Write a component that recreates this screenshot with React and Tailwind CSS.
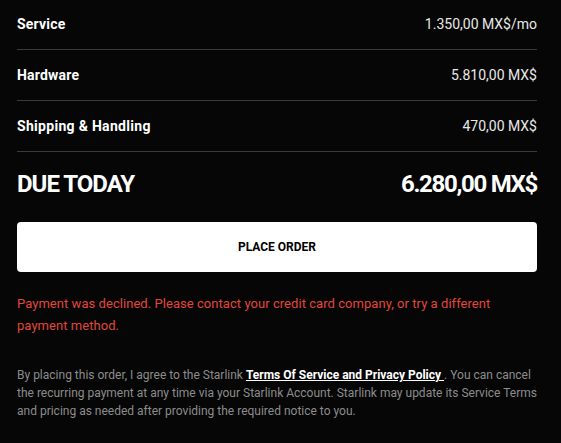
export default function App() {
  const font = { fontFamily: "Roboto, 'Liberation Sans', sans-serif" };
  return (
    <div className="min-h-[443px] w-full bg-[#060606] pl-[17px] pr-[24px] text-white" style={font}>
      <div className="flex h-[50px] items-center justify-between border-b border-[#3a3a3a] pb-[1px]">
        <span className="text-[14px] font-bold tracking-[0.2px]">Service</span>
        <span className="text-[14px] text-[#e8e8e8]">1.350,00 MX$/mo</span>
      </div>
      <div className="flex h-[51px] items-center justify-between border-b border-[#3a3a3a]">
        <span className="text-[14px] font-bold tracking-[0.2px]">Hardware</span>
        <span className="text-[14px] text-[#e8e8e8]">5.810,00 MX$</span>
      </div>
      <div className="flex h-[51px] items-center justify-between border-b border-[#3a3a3a]">
        <span className="text-[14px] font-bold tracking-[0.3px]">Shipping &amp; Handling</span>
        <span className="text-[14px] text-[#e8e8e8]">470,00 MX$</span>
      </div>
      <div className="flex h-[64px] items-center justify-between">
        <span className="text-[24px] font-bold tracking-[-1px]">DUE TODAY</span>
        <span className="text-[24px] font-bold tracking-[-1.3px]">6.280,00 MX$</span>
      </div>
      <button className="mt-[6px] flex h-[50px] w-full items-center justify-center rounded-[4px] bg-white text-[12px] font-bold text-black">
        PLACE ORDER
      </button>
      <p className="mt-[21px] text-[13px] leading-[22px] tracking-[0.05px] text-[#e0463c]">
        Payment was declined. Please contact your credit card company, or try a different payment method.
      </p>
      <p className="mt-[29px] text-[12px] leading-[18px] text-[#8c8c8c]">
        By placing this order, I agree to the Starlink{" "}
        <a className="font-bold text-white underline">Terms Of Service and Privacy Policy&nbsp;</a>. You can cancel the
        recurring payment at any time via your Starlink Account. Starlink may update its Service Terms and pricing as
        needed after providing the required notice to you.
      </p>
    </div>
  );
}
